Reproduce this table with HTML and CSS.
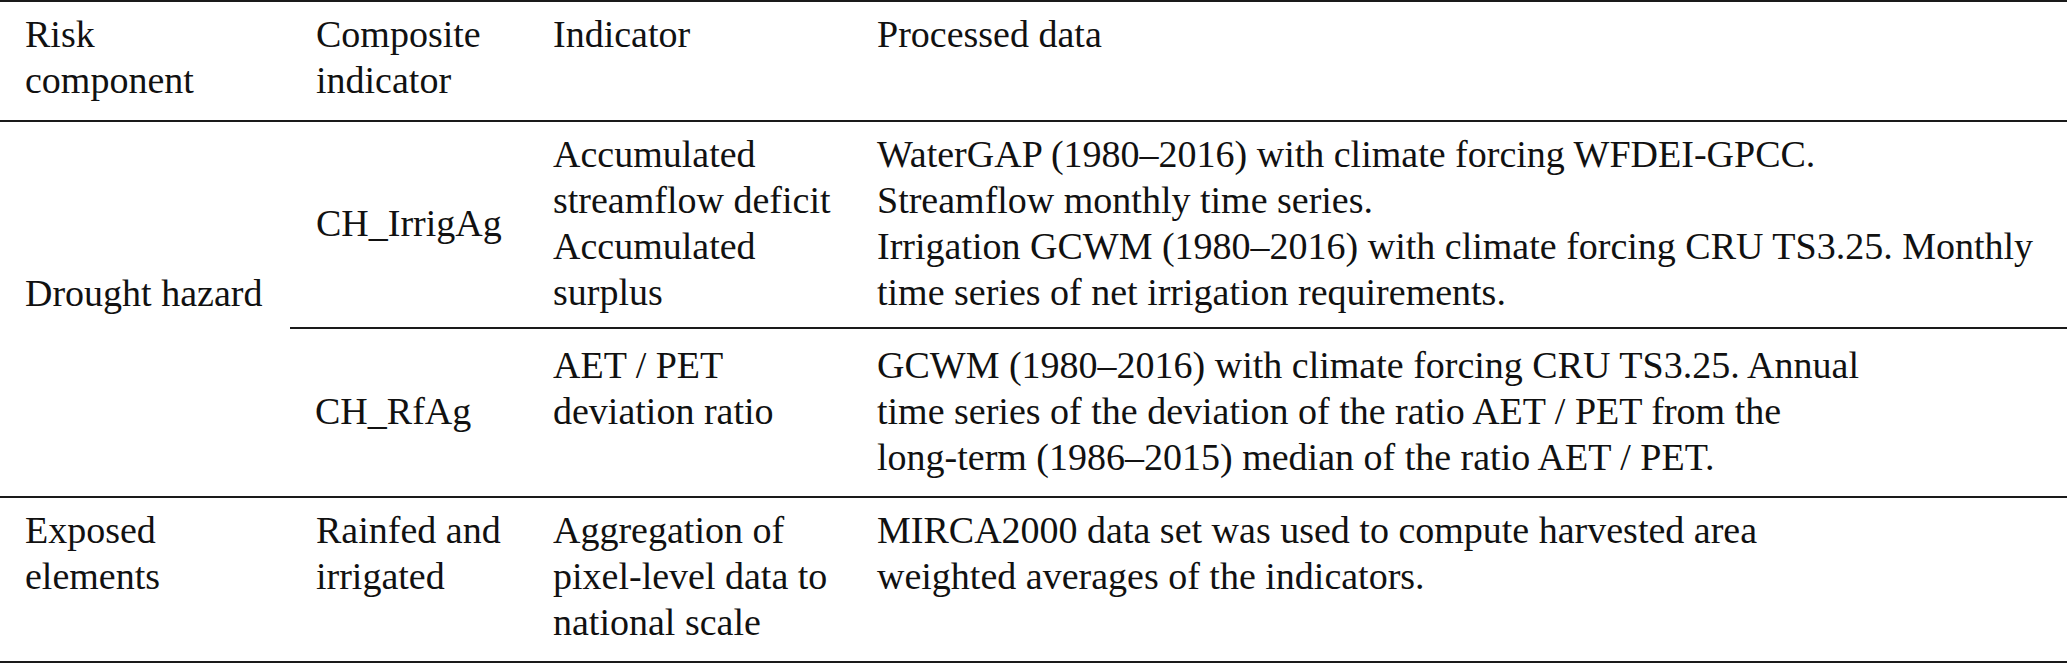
FILE: index.html
```html
<!DOCTYPE html>
<html lang="en">
<head>
<meta charset="utf-8">
<title>Drought risk indicators</title>
<link rel="stylesheet" href="styles.css">
</head>
<body>
<table class="risk-table">
  <colgroup>
    <col class="col-risk">
    <col class="col-composite">
    <col class="col-indicator">
    <col class="col-data">
  </colgroup>
  <thead>
    <tr>
      <th>Risk<br>component</th>
      <th>Composite<br>indicator</th>
      <th>Indicator</th>
      <th>Processed data</th>
    </tr>
  </thead>
  <tbody>
    <tr class="row-irrig">
      <td rowspan="2" class="hazard">Drought hazard</td>
      <td class="composite">CH_IrrigAg</td>
      <td>Accumulated<br>streamflow deficit<br>Accumulated<br>surplus</td>
      <td>WaterGAP (1980–2016) with climate forcing WFDEI-GPCC.<br>Streamflow monthly time series.<br>Irrigation GCWM (1980–2016) with climate forcing CRU TS3.25. Monthly<br>time series of net irrigation requirements.</td>
    </tr>
    <tr class="row-rf">
      <td class="composite">CH_RfAg</td>
      <td>AET / PET<br>deviation ratio</td>
      <td>GCWM (1980–2016) with climate forcing CRU TS3.25. Annual<br>time series of the deviation of the ratio AET / PET from the<br>long-term (1986–2015) median of the ratio AET / PET.</td>
    </tr>
    <tr class="row-exposed">
      <td>Exposed<br>elements</td>
      <td>Rainfed and<br>irrigated</td>
      <td>Aggregation of<br>pixel-level data to<br>national scale</td>
      <td>MIRCA2000 data set was used to compute harvested area<br>weighted averages of the indicators.</td>
    </tr>
  </tbody>
</table>
</body>
</html>
```

FILE: styles.css
```css
html, body {
  margin: 0;
  padding: 0;
  background: #ffffff;
}

.risk-table {
  width: 2067px;
  table-layout: fixed;
  border-collapse: separate;
  border-spacing: 0;
  font-family: "Liberation Serif", "Times New Roman", serif;
  font-size: 38px;
  line-height: 46px;
  color: #111111;
}

.col-risk { width: 290px; }
.col-composite { width: 237px; }
.col-indicator { width: 324px; }
.col-data { width: 1216px; }

.risk-table th,
.risk-table td {
  padding: 0 0 0 26px;
  text-align: left;
  vertical-align: top;
  white-space: nowrap;
  font-weight: normal;
}

.risk-table th:first-child,
.risk-table td:first-child {
  padding-left: 25px;
}

.risk-table th {
  border-top: 2px solid #1a1a1a;
  border-bottom: 2px solid #1a1a1a;
  padding-top: 9px;
  padding-bottom: 17px;
}

.row-irrig td {
  padding-top: 9px;
  padding-bottom: 12px;
  border-bottom: 2px solid #1a1a1a;
}

.row-rf td {
  padding-top: 13px;
  padding-bottom: 16px;
  border-bottom: 2px solid #1a1a1a;
}

.row-exposed td {
  padding-top: 9px;
  padding-bottom: 16px;
  border-bottom: 2px solid #1a1a1a;
}

.risk-table td.composite {
  vertical-align: middle;
}

.risk-table td.hazard {
  padding-top: 148px;
  padding-bottom: 0;
}
```
